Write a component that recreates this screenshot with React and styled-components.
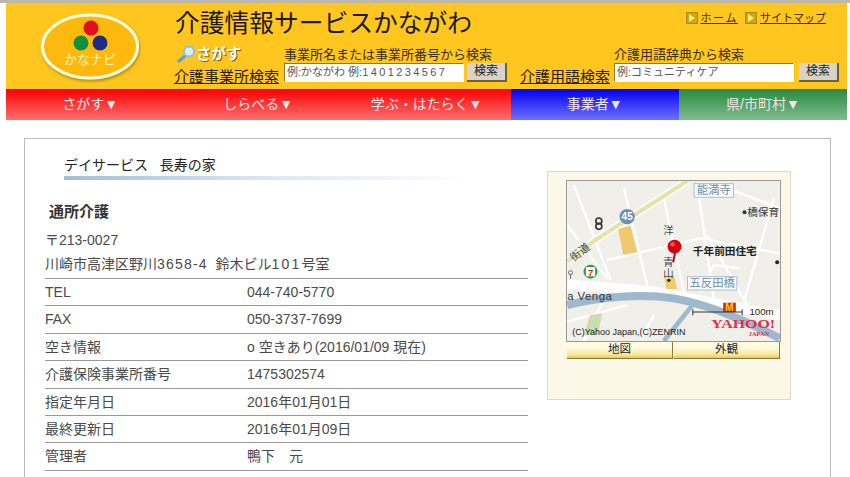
import React from "react";
import styled, { createGlobalStyle } from "styled-components";

const Global = createGlobalStyle`
  html, body {
    margin: 0;
    height: 477px;
    overflow: hidden;
    background: #fff;
    font-family: "Liberation Sans", "Noto Sans CJK JP", sans-serif;
    color: #333;
  }
`;

const TopStrip = styled.div`
  height: 3px;
  background: #bdb8ac;
`;

const Wrap = styled.div`
  margin: 0 3px 0 6px;
`;

const Header = styled.header`
  display: flex;
  height: 86px;
  background: #fec61f;
  color: #222;
`;

const LogoBox = styled.div`
  width: 168px;
  padding: 10px 0 0 35px;
  box-sizing: border-box;
  flex: none;
`;

const HeaderMain = styled.div`
  flex: 1;
  display: flex;
  flex-direction: column;
`;

const TitleRow = styled.div`
  display: flex;
  justify-content: space-between;
  height: 38px;
`;

const Title = styled.h1`
  margin: 6px 0 0 1px;
  font-size: 24.75px;
  line-height: 30px;
  font-weight: 400;
  color: #1d1a12;
`;

const TopLinks = styled.div`
  display: flex;
  gap: 7px;
  padding: 7px 21px 0 0;
  font-size: 11px;
  line-height: 16px;
`;

const TopLink = styled.a`
  display: flex;
  align-items: center;
  gap: 3px;
  height: 16px;
  color: #3a2f10;
  text-decoration: underline;
  letter-spacing: ${(p) => p.$spacing || 0}px;
`;

const Arrow = styled.span`
  width: 10px;
  height: 10px;
  background: #c8a818;
  border: 1px solid #a88c10;
  display: flex;
  align-items: center;
  justify-content: center;

  &::after {
    content: "";
    border-left: 6px solid #ffec70;
    border-top: 4px solid transparent;
    border-bottom: 4px solid transparent;
  }
`;

const SearchRow = styled.div`
  display: flex;
`;

const SearchLead = styled.div`
  box-sizing: border-box;
  width: ${(p) => p.$width}px;
  padding-left: ${(p) => p.$inset || 0}px;
  flex: none;
  display: flex;
  flex-direction: column;
  justify-content: flex-end;
  height: 46px;
`;

const Sagasu = styled.div`
  display: flex;
  align-items: center;
  height: 18px;
  margin: 0 0 3px 3px;
  font-size: 15px;
  line-height: 18px;
  font-weight: 700;
  color: #fff;
  text-shadow: 1px 1px 1px #6a5a20;
`;

const SearchLink = styled.a`
  font-size: 15px;
  line-height: 21px;
  color: #2a2008;
  text-decoration: underline;
  white-space: nowrap;
`;

const Field = styled.div`
  width: ${(p) => p.$width}px;
  flex: none;
  padding-top: 5px;
`;

const FieldLabel = styled.div`
  font-size: 13px;
  line-height: 16px;
  height: 16px;
  padding-top: 1px;
  color: #3a3010;
`;

const FieldRow = styled.div`
  display: flex;
  justify-content: space-between;
`;

const Input = styled.div`
  box-sizing: border-box;
  width: ${(p) => p.$width}px;
  height: 19px;
  padding-left: 2px;
  background: #fff;
  border: 1px solid #fff;
  border-top-color: #8a7a40;
  border-left-color: #8a7a40;
  font-size: 11px;
  line-height: 17px;
  color: #555;
  white-space: nowrap;
  overflow: hidden;
`;

const Spaced = styled.span`
  letter-spacing: ${(p) => p.$by}px;
`;

const SearchBtn = styled.button`
  box-sizing: border-box;
  width: 40px;
  height: 19px;
  padding: 0;
  border: none;
  border-right: 2px solid #6f6238;
  border-bottom: 2px solid #6f6238;
  background: #d8d4c8;
  font: inherit;
  font-size: 12px;
  line-height: 17px;
  color: #222;
`;

const Nav = styled.nav`
  display: grid;
  grid-template-columns: repeat(5, 1fr);
  height: 31px;
`;

const NavItem = styled.div`
  background: linear-gradient(${(p) => p.$from}, ${(p) => p.$to});
  color: #f4e4e4;
  font-size: 14px;
  line-height: 30px;
  text-align: center;
`;

const Card = styled.main`
  margin: 18px 19px 0 24px;
  height: 400px;
  border: 1px solid #bbb;
  border-bottom: none;
  display: flex;
  box-sizing: border-box;
`;

const InfoCol = styled.div`
  box-sizing: border-box;
  width: 503px;
  flex: none;
  padding-left: 20px;
`;

const Heading = styled.h2`
  margin: 16px 0 1px 19px;
  font-size: 14px;
  line-height: 20px;
  font-weight: 400;
  color: #222;
  word-spacing: 2px;
`;

const HeadRule = styled.div`
  height: 4px;
  width: 406px;
  margin: 0 0 0 19px;
  background: linear-gradient(90deg, #a3c0d0, #d8e8f2 50%, #fff);
`;

const Service = styled.h3`
  margin: 22px 0 6px 4px;
  font-size: 15px;
  line-height: 20px;
  font-weight: 700;
  color: #333;
`;

const AddressLine = styled.div`
  font-size: 14px;
  line-height: 24px;
  height: 24px;
  color: #4a4a4a;
`;

const Rows = styled.div`
  margin-top: 2px;
  border-top: 1px solid #999;
  width: 483px;
`;

const Row = styled.div`
  display: grid;
  grid-template-columns: 202px 1fr;
  height: 26.4px;
  border-bottom: 1px solid #999;
  font-size: 14px;
  line-height: 27px;
  color: #4a4a4a;
`;

const MapPanel = styled.aside`
  margin: 32px 0 0 19px;
  width: 244px;
  height: 229px;
  box-sizing: border-box;
  padding: 9px 10px 0 19px;
  background: #fbf8e7;
  border: 1px solid #ddd9c8;
`;

const MapFrame = styled.div`
  width: 213px;
  height: 160px;
  line-height: 0;
  outline: 1px solid #999;
`;

const MapTabs = styled.div`
  display: grid;
  grid-template-columns: 1fr 1fr;
  gap: 1px;
  width: 213px;
`;

const MapTab = styled.div`
  height: 18px;
  box-sizing: border-box;
  background: linear-gradient(#fffbe0 40%, #f7e69a 80%, #eccb3a);
  border-right: 1px solid #8a7a40;
  border-bottom: 1px solid #8a7a40;
  font-size: 11.5px;
  line-height: 17px;
  text-align: center;
  color: #222;
`;

const rows = [
  ["TEL", "044-740-5770"],
  ["FAX", "050-3737-7699"],
  ["空き情報", "o 空きあり(2016/01/09 現在)"],
  ["介護保険事業所番号", "1475302574"],
  ["指定年月日", "2016年01月01日"],
  ["最終更新日", "2016年01月09日"],
  ["管理者", "鴨下　元"],
];

const navs = [
  ["さがす▼", "#f80000", "#ff7070"],
  ["しらべる▼", "#f80000", "#ff7070"],
  ["学ぶ・はたらく▼", "#f80000", "#ff7070"],
  ["事業者▼", "#0000f0", "#7070ff"],
  ["県/市町村▼", "#288a40", "#80bc90"],
];

const Logo = () => (
  <svg width="100" height="70" viewBox="0 0 100 70">
    <defs>
      <filter id="logoShadow" x="-10%" y="-10%" width="125%" height="125%">
        <feDropShadow dx="1" dy="2" stdDeviation="1.5" floodColor="#9a7400" floodOpacity="0.7" />
      </filter>
    </defs>
    <ellipse cx="49" cy="33.5" rx="47.5" ry="31.5" fill="#fdb90c" stroke="#fffce0" strokeWidth="3" filter="url(#logoShadow)" />
    <circle cx="50" cy="15" r="7.5" fill="#e01020" />
    <circle cx="40" cy="30" r="7.5" fill="#109040" />
    <circle cx="59" cy="30" r="7.5" fill="#1c2c88" />
    <text x="49" y="51" fontSize="13" fill="#fff3c0" textAnchor="middle" fontFamily="'Noto Sans CJK JP', sans-serif">かなナビ</text>
  </svg>
);

const Magnifier = () => (
  <svg width="19" height="18" viewBox="0 0 19 18">
    <line x1="8" y1="11" x2="2" y2="16" stroke="#5aa0d8" strokeWidth="3" strokeLinecap="round" />
    <circle cx="12" cy="6.5" r="5" fill="#d8eef8" stroke="#8ec0e0" strokeWidth="2" />
  </svg>
);

// ビューボックスは参照画像の拡大座標に合わせてある
const MapArt = () => (
  <svg width="213" height="160" viewBox="80 48 638 480" fontFamily="'Liberation Sans', 'Noto Sans CJK JP', sans-serif">
    <rect x="80" y="48" width="638" height="480" fill="#f1efe9" />
    <g fill="none" stroke="#fff" strokeWidth="7">
      <path d="M100 60 L210 345 M250 70 L320 360 M370 100 L430 380 M470 60 L520 400 M560 70 L718 130" />
      <path d="M200 285 L480 220 L718 265 M500 210 L620 420 M700 100 L610 410 M80 180 L200 340" />
      <path d="M80 470 L260 420 M190 400 L130 528 M300 528 L340 450 M480 380 L520 300 L600 310" />
    </g>
    <path d="M80 290 L165 225 L440 48" fill="none" stroke="#fff" strokeWidth="22" />
    <path d="M80 290 L165 225 L440 48" fill="none" stroke="#e6e2ae" strokeWidth="13" />
    <path d="M80 358 L330 378 L718 452" fill="none" stroke="#fff" strokeWidth="30" />
    <path d="M80 420 C180 395 300 385 400 400 C480 415 560 440 718 520" fill="none" stroke="#9fb8cc" strokeWidth="24" />
    <path d="M460 415 L370 528" fill="none" stroke="#9fb8cc" strokeWidth="14" />
    <polygon points="233,192 270,183 290,262 248,270" fill="#f0c96e" />
    <polygon points="372,342 400,330 410,372 378,372" fill="#f0c96e" />
    <polygon points="148,450 185,445 172,510 132,510" fill="#c9dcb2" />
    <circle cx="385" cy="346" r="5" fill="#222" />
    <circle cx="710" cy="292" r="6" fill="#222" />
    <circle cx="175" cy="168" r="9" fill="none" stroke="#333" strokeWidth="5" />
    <circle cx="175" cy="184" r="9" fill="none" stroke="#333" strokeWidth="5" />
    <circle cx="150" cy="320" r="21" fill="#2c9a48" />
    <rect x="136" y="306" width="28" height="28" fill="#fff" />
    <text x="150" y="332" fontSize="28" fontWeight="700" fill="#e02020" textAnchor="middle">7</text>
    <circle cx="90" cy="323" r="6" fill="none" stroke="#333" strokeWidth="2" />
    <line x1="90" y1="329" x2="90" y2="342" stroke="#333" strokeWidth="2" />
    <text x="100" y="290" fontSize="32" fill="#444" transform="rotate(-38 100 290)">街道</text>
    <circle cx="260" cy="155" r="23" fill="#6c8fb2" />
    <text x="260" y="166" fontSize="30" fontWeight="700" fill="#fff" textAnchor="middle">45</text>
    <rect x="461" y="56" width="118" height="41" fill="#fafafa" stroke="#a9c2d2" strokeWidth="3" />
    <text x="520" y="88" fontSize="34" fill="#6d8eaa" textAnchor="middle">能満寺</text>
    <rect x="441" y="335" width="148" height="40" fill="#fafafa" stroke="#a9c2d2" strokeWidth="3" />
    <text x="515" y="367" fontSize="34" fill="#6d8eaa" textAnchor="middle">五反田橋</text>
    <circle cx="612" cy="142" r="6" fill="#333" />
    <text x="620" y="154" fontSize="32" fill="#333">橋保育</text>
    <text x="457" y="270" fontSize="32" fontWeight="700" fill="#222">千年前田住宅</text>
    <text x="368" y="206" fontSize="31" fill="#444">洋</text>
    <text x="368" y="302" fontSize="31" fill="#444">青</text>
    <text x="368" y="336" fontSize="31" fill="#444">山</text>
    <path d="M404 262 L398 292" stroke="#a01020" strokeWidth="6" />
    <circle cx="402" cy="245" r="21" fill="#d80010" />
    <circle cx="396" cy="238" r="7" fill="#f05060" />
    <text x="80" y="405" fontSize="34" fill="#333" letterSpacing="1.5">a Venga</text>
    <rect x="548" y="413" width="38" height="28" fill="#d03010" />
    <text x="567" y="439" fontSize="30" fontWeight="700" fill="#f8c820" textAnchor="middle">M</text>
    <path d="M457 433 V451 M457 441 H605 M605 433 V451" fill="none" stroke="#333" strokeWidth="3" />
    <text x="627" y="451" fontSize="29" fill="#222">100m</text>
    <text x="95" y="511" fontSize="27" fill="#222">(C)Yahoo Japan,(C)ZENRIN</text>
    <text x="512" y="489" fontSize="39" fontWeight="700" fill="#e0304a" fontFamily="'Liberation Serif', serif" textLength="192" lengthAdjust="spacingAndGlyphs">YAHOO!</text>
    <text x="625" y="513" fontSize="19" fontWeight="700" fill="#d03048" fontFamily="'Liberation Serif', serif">JAPAN</text>
  </svg>
);

const App = () => (
  <>
    <Global />
    <TopStrip />
    <Wrap>
      <Header>
        <LogoBox>
          <Logo />
        </LogoBox>
        <HeaderMain>
          <TitleRow>
            <Title>介護情報サービスかながわ</Title>
            <TopLinks>
              <TopLink $spacing={1.6}><Arrow />ホーム</TopLink>
              <TopLink><Arrow />サイトマップ</TopLink>
            </TopLinks>
          </TitleRow>
          <SearchRow>
            <SearchLead $width={110}>
              <Sagasu><Magnifier />さがす</Sagasu>
              <SearchLink>介護事業所検索</SearchLink>
            </SearchLead>
            <Field $width={223}>
              <FieldLabel>事業所名または事業所番号から検索</FieldLabel>
              <FieldRow>
                <Input $width={180}>例:かながわ 例:<Spaced $by={2.4}>1401234567</Spaced></Input>
                <SearchBtn>検索</SearchBtn>
              </FieldRow>
            </Field>
            <SearchLead $width={107} $inset={13}>
              <SearchLink>介護用語検索</SearchLink>
            </SearchLead>
            <Field $width={225}>
              <FieldLabel>介護用語辞典から検索</FieldLabel>
              <FieldRow>
                <Input $width={180}>例:コミュニティケア</Input>
                <SearchBtn>検索</SearchBtn>
              </FieldRow>
            </Field>
          </SearchRow>
        </HeaderMain>
      </Header>
      <Nav>
        {navs.map(([label, from, to]) => (
          <NavItem key={label} $from={from} $to={to}>{label}</NavItem>
        ))}
      </Nav>
    </Wrap>
    <Card>
      <InfoCol>
        <Heading>デイサービス&nbsp;&nbsp;長寿の家</Heading>
        <HeadRule />
        <Service>通所介護</Service>
        <AddressLine>〒213-0027</AddressLine>
        <AddressLine>
          川崎市高津区野川<Spaced $by={1.2}>3658-4</Spaced>&nbsp;&nbsp;鈴木ビル<Spaced $by={2.2}>101</Spaced>号室
        </AddressLine>
        <Rows>
          {rows.map(([k, v]) => (
            <Row key={k}>
              <span>{k}</span>
              <span>{v}</span>
            </Row>
          ))}
        </Rows>
      </InfoCol>
      <MapPanel>
        <MapFrame>
          <MapArt />
        </MapFrame>
        <MapTabs>
          <MapTab>地図</MapTab>
          <MapTab>外観</MapTab>
        </MapTabs>
      </MapPanel>
    </Card>
  </>
);

export default App;
